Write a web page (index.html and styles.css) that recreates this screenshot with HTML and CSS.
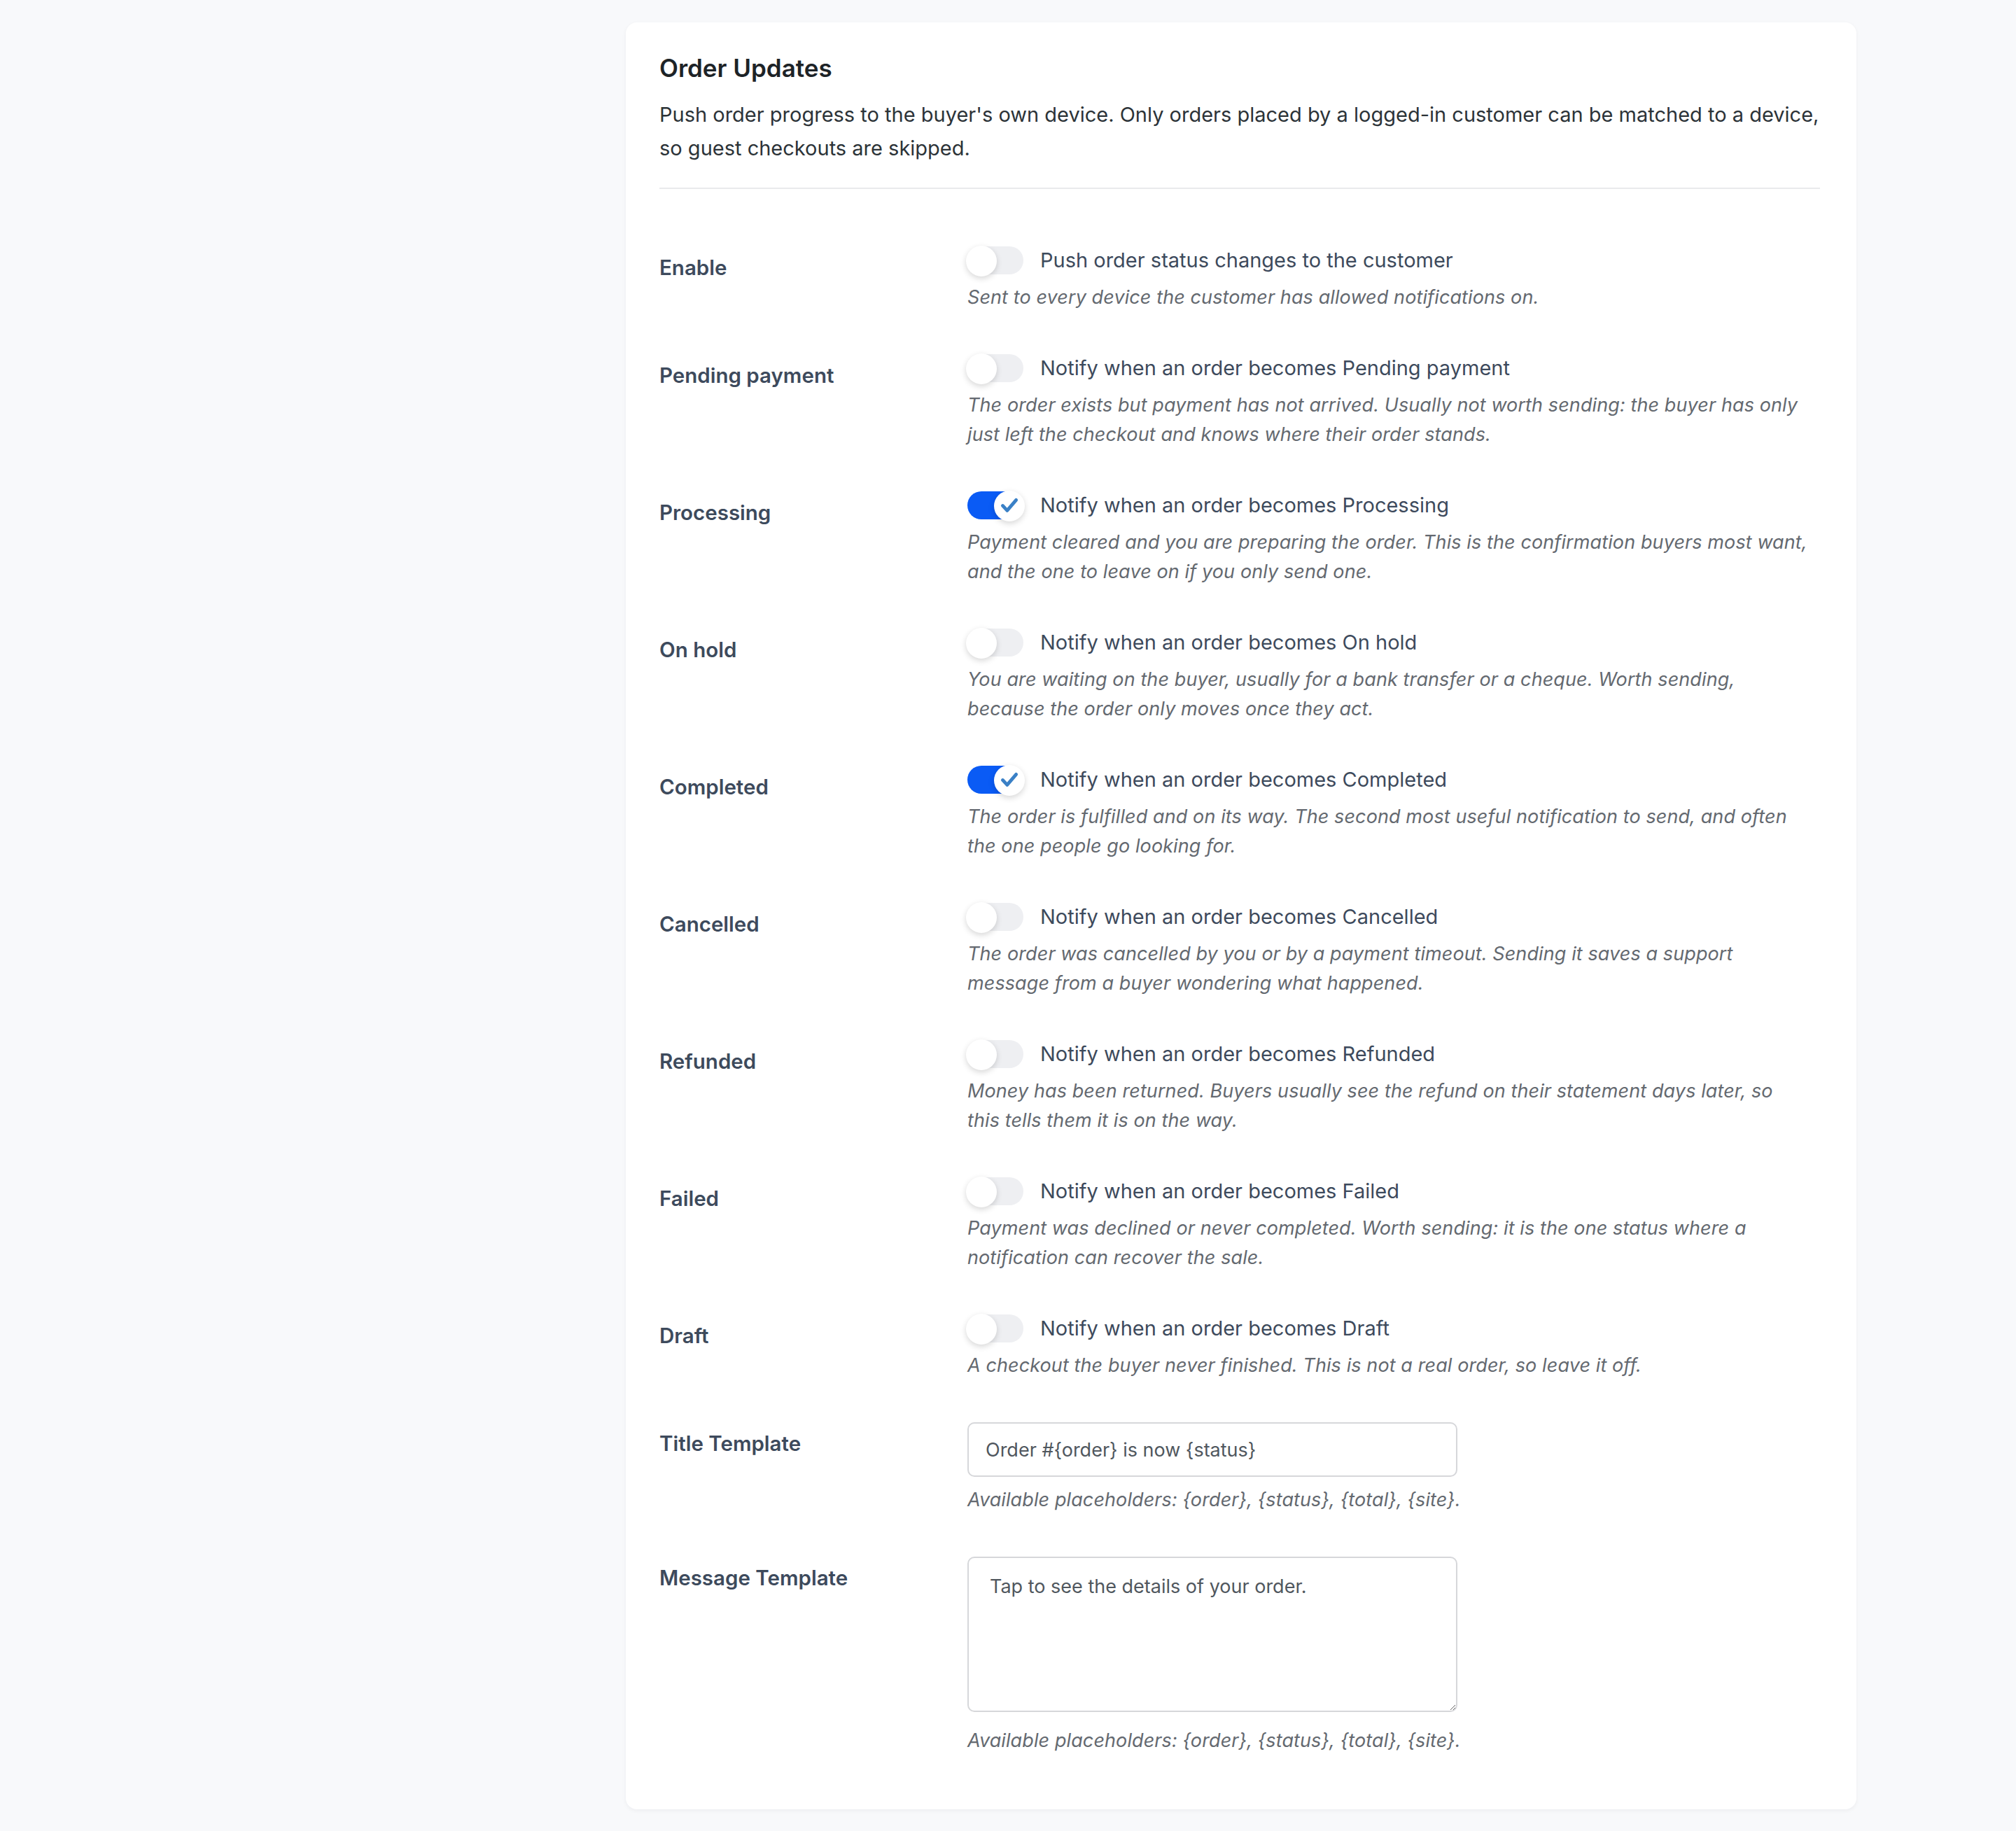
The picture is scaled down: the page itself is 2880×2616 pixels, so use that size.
FILE: index.html
```html
<!DOCTYPE html>
<html>
  <head>
    <meta charset="utf-8" />
    <title>Order Updates</title>
    <link rel="stylesheet" href="styles.css">
  </head>
  <body>
    <div class="card">
      <h2>Order Updates</h2>
      <p class="intro">
        Push order progress to the buyer's own device. Only orders placed by a logged-in customer can be matched to a device, so guest checkouts are skipped.
      </p>

      <div class="form">
        <div class="row">
          <div class="label">Enable</div>
          <div class="field">
            <label class="switch">
              <input type="checkbox" />
              <span class="track"><span class="knob"><svg viewBox="0 0 28 28"><path d="M5 13.5l6 6.5L23 6" /></svg></span></span>
              <span class="text">Push order status changes to the customer</span>
            </label>
            <p class="help">Sent to every device the customer has allowed notifications on.</p>
          </div>
        </div>

        <div class="row">
          <div class="label">Pending payment</div>
          <div class="field">
            <label class="switch">
              <input type="checkbox" />
              <span class="track"><span class="knob"><svg viewBox="0 0 28 28"><path d="M5 13.5l6 6.5L23 6" /></svg></span></span>
              <span class="text">Notify when an order becomes Pending payment</span>
            </label>
            <p class="help">The order exists but payment has not arrived. Usually not worth sending: the buyer has only just left the checkout and knows where their order stands.</p>
          </div>
        </div>

        <div class="row">
          <div class="label">Processing</div>
          <div class="field">
            <label class="switch">
              <input type="checkbox" checked />
              <span class="track"><span class="knob"><svg viewBox="0 0 28 28"><path d="M5 13.5l6 6.5L23 6" /></svg></span></span>
              <span class="text">Notify when an order becomes Processing</span>
            </label>
            <p class="help">Payment cleared and you are preparing the order. This is the confirmation buyers most want, and the one to leave on if you only send one.</p>
          </div>
        </div>

        <div class="row">
          <div class="label">On hold</div>
          <div class="field">
            <label class="switch">
              <input type="checkbox" />
              <span class="track"><span class="knob"><svg viewBox="0 0 28 28"><path d="M5 13.5l6 6.5L23 6" /></svg></span></span>
              <span class="text">Notify when an order becomes On hold</span>
            </label>
            <p class="help">You are waiting on the buyer, usually for a bank transfer or a cheque. Worth sending, because the order only moves once they act.</p>
          </div>
        </div>

        <div class="row">
          <div class="label">Completed</div>
          <div class="field">
            <label class="switch">
              <input type="checkbox" checked />
              <span class="track"><span class="knob"><svg viewBox="0 0 28 28"><path d="M5 13.5l6 6.5L23 6" /></svg></span></span>
              <span class="text">Notify when an order becomes Completed</span>
            </label>
            <p class="help">The order is fulfilled and on its way. The second most useful notification to send, and often the one people go looking for.</p>
          </div>
        </div>

        <div class="row">
          <div class="label">Cancelled</div>
          <div class="field">
            <label class="switch">
              <input type="checkbox" />
              <span class="track"><span class="knob"><svg viewBox="0 0 28 28"><path d="M5 13.5l6 6.5L23 6" /></svg></span></span>
              <span class="text">Notify when an order becomes Cancelled</span>
            </label>
            <p class="help">The order was cancelled by you or by a payment timeout. Sending it saves a support message from a buyer wondering what happened.</p>
          </div>
        </div>

        <div class="row">
          <div class="label">Refunded</div>
          <div class="field">
            <label class="switch">
              <input type="checkbox" />
              <span class="track"><span class="knob"><svg viewBox="0 0 28 28"><path d="M5 13.5l6 6.5L23 6" /></svg></span></span>
              <span class="text">Notify when an order becomes Refunded</span>
            </label>
            <p class="help">Money has been returned. Buyers usually see the refund on their statement days later, so this tells them it is on the way.</p>
          </div>
        </div>

        <div class="row">
          <div class="label">Failed</div>
          <div class="field">
            <label class="switch">
              <input type="checkbox" />
              <span class="track"><span class="knob"><svg viewBox="0 0 28 28"><path d="M5 13.5l6 6.5L23 6" /></svg></span></span>
              <span class="text">Notify when an order becomes Failed</span>
            </label>
            <p class="help">Payment was declined or never completed. Worth sending: it is the one status where a notification can recover the sale.</p>
          </div>
        </div>

        <div class="row">
          <div class="label">Draft</div>
          <div class="field">
            <label class="switch">
              <input type="checkbox" />
              <span class="track"><span class="knob"><svg viewBox="0 0 28 28"><path d="M5 13.5l6 6.5L23 6" /></svg></span></span>
              <span class="text">Notify when an order becomes Draft</span>
            </label>
            <p class="help">A checkout the buyer never finished. This is not a real order, so leave it off.</p>
          </div>
        </div>

        <div class="row">
          <div class="label">Title Template</div>
          <div class="field">
            <input class="text-input" type="text" value="Order #{order} is now {status}" />
            <p class="help">Available placeholders: {order}, {status}, {total}, {site}.</p>
          </div>
        </div>

        <div class="row">
          <div class="label">Message Template</div>
          <div class="field">
            <textarea class="text-area">Tap to see the details of your order.</textarea>
            <p class="help">Available placeholders: {order}, {status}, {total}, {site}.</p>
          </div>
        </div>
      </div>
    </div>
  </body>
</html>
```

FILE: styles.css
```css
body {
  margin: 0;
  background: #f8f9fb;
  font-family: -apple-system, BlinkMacSystemFont, 'Segoe UI', Inter, Roboto,
    'Helvetica Neue', sans-serif;
  color: #3c4858;
}
.card {
  width: 1758px;
  box-sizing: border-box;
  margin: 32px 0 32px 894px;
  padding: 44px 52px 47px 48px;
  background: #fff;
  border-radius: 16px;
  box-shadow: 0 2px 6px rgba(15, 23, 42, 0.05);
}
.card h2 {
  margin: 0 0 22px;
  font-size: 35px;
  line-height: 1.2;
  font-weight: 600;
  color: #1d2327;
}
.intro {
  margin: 0;
  padding-bottom: 32px;
  border-bottom: 2px solid #e9eaec;
  font-size: 29px;
  line-height: 48px;
  color: #2c3338;
}
.form {
  margin-top: 52px;
}
.row {
  display: grid;
  grid-template-columns: 440px 1fr;
  padding: 30px 0;
}
.field {
  padding-right: 18px;
}
.label {
  padding-top: 10px;
  font-size: 29.5px;
  line-height: 40px;
  font-weight: 600;
  color: #3d4a5c;
}
.switch {
  display: flex;
  align-items: center;
  gap: 24px;
  cursor: pointer;
}
.switch input {
  display: none;
}
.track {
  position: relative;
  width: 80px;
  height: 40px;
  border-radius: 20px;
  background: #eeeff2;
  flex-shrink: 0;
}
.knob {
  position: absolute;
  top: -1px;
  left: -2px;
  width: 44px;
  height: 44px;
  border-radius: 50%;
  background: #fff;
  box-shadow: 0 3px 8px rgba(0, 0, 0, 0.16);
  display: flex;
  align-items: center;
  justify-content: center;
}
.knob svg {
  display: none;
  width: 30px;
  height: 30px;
  fill: none;
  stroke: #3a80c6;
  stroke-width: 4.5;
  stroke-linecap: round;
  stroke-linejoin: round;
}
.switch input:checked + .track {
  background: #0a5bf5;
}
.switch input:checked + .track .knob {
  left: 38px;
}
.switch input:checked + .track svg {
  display: block;
}
.switch .text {
  font-size: 29px;
  line-height: 40px;
  color: #3d4a5c;
}
.help {
  margin: 12px 0 0;
  font-size: 27px;
  line-height: 42px;
  letter-spacing: 0.1px;
  font-style: italic;
  color: #646970;
}
.text-input,
.text-area {
  display: block;
  box-sizing: border-box;
  width: 700px;
  border: 2px solid #d6d7da;
  border-radius: 10px;
  font-family: inherit;
  font-size: 27px;
  color: #50575e;
  background: #fff;
}
.text-input {
  height: 78px;
  padding: 0 24px;
}
.text-area {
  height: 222px;
  padding: 20px 30px;
  line-height: 42px;
  resize: vertical;
}
.text-area + .help {
  margin-top: 20px;
}
```
